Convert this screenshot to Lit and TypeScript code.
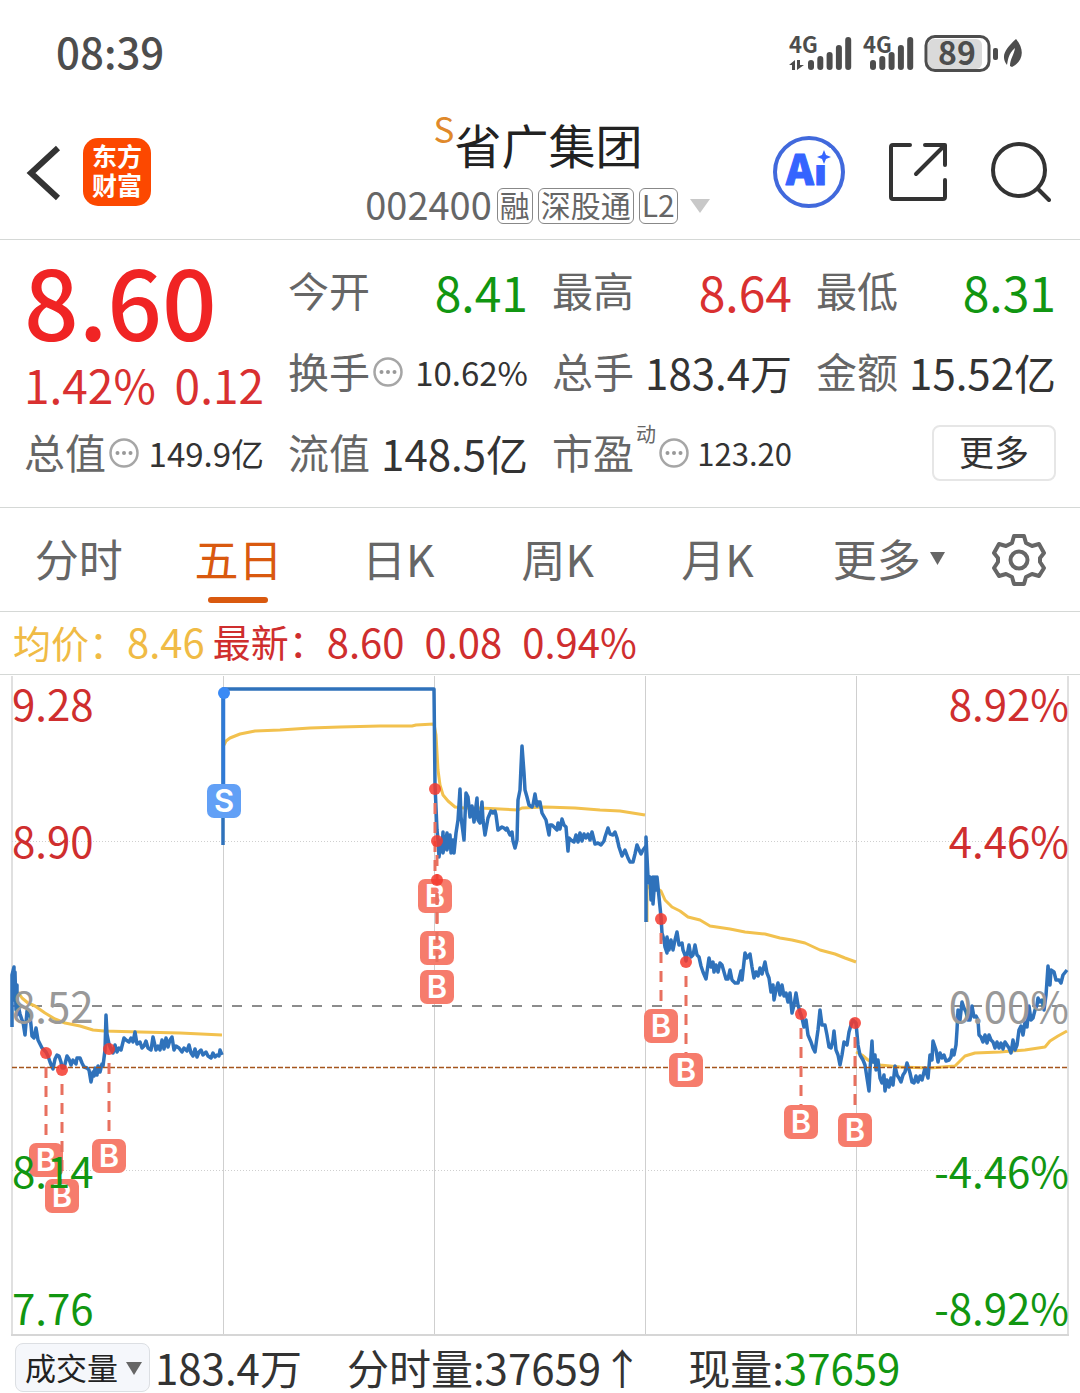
import { LitElement, html, svg, css, nothing } from "lit";
import { customElement, state } from "lit/decorators.js";
import { classMap } from "lit/directives/class-map.js";

type Tone = "up" | "down" | "plain";

interface Quote {
  label: string;
  value: string;
  tone: Tone;
  size: "lg" | "md" | "sm" | "xs";
  info?: boolean;
  sup?: string;
}

interface Marker {
  kind: "B" | "S";
  x: number;
  y: number;
  /** Distance from the trade point down to the centre of its badge. */
  stem: number;
}

const QUOTES: Quote[] = [
  { label: "今开", value: "8.41", tone: "down", size: "lg" },
  { label: "最高", value: "8.64", tone: "up", size: "lg" },
  { label: "最低", value: "8.31", tone: "down", size: "lg" },
  { label: "换手", value: "10.62%", tone: "plain", size: "sm", info: true },
  { label: "总手", value: "183.4万", tone: "plain", size: "md" },
  { label: "金额", value: "15.52亿", tone: "plain", size: "md" },
  { label: "总值", value: "149.9亿", tone: "plain", size: "sm", info: true },
  { label: "流值", value: "148.5亿", tone: "plain", size: "md" },
  { label: "市盈", value: "123.20", tone: "plain", size: "xs", info: true, sup: "动" },
];

const TABS = ["分时", "五日", "日K", "周K", "月K"];

const PRICE_LINES = [
  "12,1027 12,975 14,967 14,1000 15,972 16,1010 17,985 17,1015 18,1005 20,1014 22,1020 23,1022 25,1035 27,1011 28,1014 30,1016 31,1025 32,1036 34,1038 36,1028 38,1040 40,1044 42,1048 44,1050 46,1052 48,1056 50,1062 52,1067 53,1069 55,1059 57,1055 59,1056 61,1062 62,1068 64,1068 66,1060 67,1056 69,1059 71,1065 73,1060 76,1064 77,1058 80,1058 82,1063 84,1067 87,1068 89,1070 91,1082 93,1072 94,1076 95,1068 97,1075 98,1066 100,1072 102,1064 103,1066 105,1050 106,1015 107,1034 109,1044 111,1049 113,1053 115,1045 117,1052 119,1048 121,1050 124,1038 126,1040 129,1042 131,1038 133,1042 135,1032 137,1044 140,1042 142,1048 144,1046 146,1041 148,1048 151,1050 153,1037 156,1050 158,1046 160,1050 162,1040 164,1049 166,1038 168,1047 170,1040 172,1037 174,1050 176,1046 179,1048 182,1052 184,1048 187,1051 189,1045 191,1053 193,1056 195,1049 197,1057 199,1052 201,1050 203,1055 206,1052 208,1056 211,1058 213,1053 215,1057 217,1055 219,1056 220,1050 222,1055",
  "223,845 223,689 434,689 435,785 437,830 438,840 439,857 441,840 442,850 443,832 443,853 447,833 447,850 450,835 451,853 453,840 454,853 456,833 458,820 460,789 461,817 464,840 466,793 468,797 470,817 472,806 474,822 477,798 478,820 480,823 482,802 483,820 485,835 488,818 491,811 493,813 495,811 496,815 498,830 502,827 504,828 506,830 507,828 509,833 510,835 512,832 513,841 515,848 517,840 518,800 520,790 521,767 522,746 524,773 525,790 527,797 529,805 532,807 533,805 535,794 537,806 538,802 540,802 542,813 546,820 549,835 550,825 552,825 554,827 557,830 558,823 560,829 562,819 564,825 566,827 568,851 569,838 571,840 574,842 576,835 578,842 580,833 582,841 584,834 586,838 588,834 590,840 592,832 595,844 598,843 601,845 604,841 605,837 608,828 610,834 613,835 615,832 617,838 619,847 622,856 625,850 628,858 630,862 633,862 635,854 637,845 640,852 641,854 643,850 646,846",
  "646,922 646,837 648,877 649,883 650,877 651,900 653,877 653,904 655,877 656,890 657,877 659,897 661,917 662,933 664,940 665,947 667,953 667,937 669,950 671,940 673,950 675,940 677,932 679,945 682,943 683,950 685,955 686,961 689,945 691,957 693,955 695,945 697,955 699,957 701,966 703,972 706,979 708,965 709,958 711,967 713,962 714,972 716,965 718,972 720,963 722,965 724,972 726,979 728,979 730,970 732,980 735,983 738,983 740,975 741,971 742,980 745,953 747,958 750,954 752,967 754,978 756,972 758,976 760,968 762,974 765,962 767,973 769,978 770,985 771,992 773,985 774,1000 776,990 778,983 780,995 782,985 784,996 786,993 788,1002 790,993 792,1013 794,1005 796,993 798,1005 800,1012 802,1018 804,1027 806,1020 808,1035 811,1042 813,1048 815,1052 817,1037 818,1030 820,1010 822,1025 825,1025 827,1035 829,1047 831,1048 833,1040 834,1031 836,1050 838,1055 840,1065 842,1055 844,1042 847,1045 849,1032 851,1025 853,1020 856,1023 858,1045 860,1055 863,1060 865,1065 867,1078 869,1091 870,1070 872,1041 873,1062 875,1055 876,1070 878,1060 880,1078 882,1083 884,1075 885,1091 887,1080 889,1087 891,1078 893,1085 895,1066 897,1075 899,1078 901,1082 903,1075 905,1072 907,1063 910,1073 912,1082 914,1083 916,1076 918,1082 920,1076 922,1080 925,1068 927,1075 928,1078 930,1055 932,1060 933,1041 936,1050 938,1062 940,1053 942,1058 944,1055 946,1061 949,1060 951,1057 952,1050 954,1055 956,1045 957,1030 958,1010 960,1020 962,1002 964,1008 966,1012 968,1020 970,1020 972,1006 974,1017 976,1016 978,1020 979,1035 981,1037 983,1042 985,1035 987,1043 989,1035 991,1040 993,1042 995,1048 997,1042 999,1048 1001,1043 1003,1049 1005,1042 1007,1045 1009,1048 1011,1053 1013,1040 1015,1050 1017,1045 1019,1030 1021,1026 1023,1035 1025,1022 1027,1027 1029,1006 1031,1020 1033,1018 1035,1010 1037,1005 1038,998 1040,1002 1042,1000 1044,1010 1046,995 1048,966 1050,985 1051,970 1054,972 1056,980 1059,980 1061,983 1063,975 1067,970",
];

const AVERAGE_LINES = [
  "18,992 22,998 28,1003 35,1006 45,1013 55,1019 65,1023 80,1026 93,1030 104,1031 140,1032 180,1033 222,1035",
  "224,745 226,741 230,738 240,734 255,731 280,730 310,728 340,727 380,726 412,726 416,725 434,724 436,735 438,770 440,785 443,795 448,801 455,807 464,808 480,808 500,809 518,810 522,808 545,807 575,808 600,810 620,811 645,815",
  "647,922 647,890 648,886 655,887 661,891 665,900 672,907 680,911 688,917 700,920 710,926 730,929 745,932 765,934 780,938 792,940 805,943 820,950 835,954 845,958 856,962",
  "856,1052 862,1055 868,1060 880,1065 900,1067 930,1068 955,1066 960,1061 965,1056 975,1053 1000,1052 1025,1050 1045,1047 1050,1041 1058,1036 1067,1031",
];

const MARKERS: Marker[] = [
  { kind: "B", x: 46, y: 1053, stem: 107 },
  { kind: "B", x: 62, y: 1070, stem: 126 },
  { kind: "B", x: 109, y: 1049, stem: 107 },
  { kind: "S", x: 224, y: 693, stem: 108 },
  { kind: "B", x: 435, y: 789, stem: 107 },
  { kind: "B", x: 437, y: 841, stem: 107 },
  { kind: "B", x: 437, y: 880, stem: 107 },
  { kind: "B", x: 661, y: 919, stem: 107 },
  { kind: "B", x: 686, y: 962, stem: 108 },
  { kind: "B", x: 801, y: 1014, stem: 108 },
  { kind: "B", x: 855, y: 1023, stem: 107 },
];

const AXIS = [
  { y: 721, left: "9.28", right: "8.92%", tone: "up" },
  { y: 858, left: "8.90", right: "4.46%", tone: "up" },
  { y: 1023, left: "8.52", right: "0.00%", tone: "flat" },
  { y: 1188, left: "8.14", right: "-4.46%", tone: "down" },
  { y: 1325, left: "7.76", right: "-8.92%", tone: "down" },
];

const FONT = css`"Noto Sans CJK SC", "Noto Sans", sans-serif`;

@customElement("phone-status")
export class PhoneStatus extends LitElement {
  static styles = css`
    :host {
      display: flex;
      justify-content: space-between;
      align-items: center;
      height: 108px;
      padding: 0 56px;
      box-sizing: border-box;
      font-family: ${FONT};
      color: #4d4d4d;
    }
    .time {
      padding-bottom: 6px;
      font-size: 42px;
      line-height: 60px;
      font-weight: 500;
    }
    .icons {
      display: block;
    }
    .net {
      font-size: 22px;
      font-weight: 700;
      fill: #4d4d4d;
    }
    .level {
      font-size: 32px;
      font-weight: 700;
      fill: #4d4d4d;
    }
  `;

  private bars(x: number) {
    return [10, 14, 18, 25, 33].map(
      (h, i) => svg`<rect x=${x + i * 9.3} y=${36 - h} width="6" height=${h} rx="3" fill="#4d4d4d" />`,
    );
  }

  render() {
    return html`
      <span class="time">08:39</span>
      <svg class="icons" width="236" height="60" viewBox="0 -10 236 60" role="img" aria-label="4G 4G 89%">
        <text class="net" x="1" y="19">4G</text>
        <path d="M1 31 L7 26 V36 H4 V31 Z M9 26 H12 V31 H16 L9 36 Z" fill="#4d4d4d" />
        ${this.bars(20)}
        <text class="net" x="75" y="19">4G</text>
        ${this.bars(82)}
        <rect x="140" y="5" width="54" height="30" rx="6" fill="#dadada" />
        <rect x="138" y="2.5" width="63" height="34" rx="9" fill="none" stroke="#4d4d4d" stroke-width="3" />
        <text class="level" x="150" y="31">89</text>
        <rect x="205" y="14" width="5" height="12" rx="2" fill="#4d4d4d" />
        <path d="M228 5 C238 17 234 28 224 33 L222 32 C222 25 226 21 227 14 C220 20 220 26 219 31 C212 22 218 14 228 5 Z" fill="#4d4d4d" />
      </svg>
    `;
  }
}

@customElement("stock-header")
export class StockHeader extends LitElement {
  static styles = css`
    :host {
      display: grid;
      grid-template-columns: 1fr auto 1fr;
      align-items: center;
      height: 132px;
      padding: 0 29px 4px 25px;
      box-sizing: border-box;
      border-bottom: 1px solid #d5d8d6;
      font-family: ${FONT};
    }
    button {
      display: block;
      padding: 0;
      border: 0;
      background: none;
      font-family: inherit;
      cursor: pointer;
    }
    svg {
      display: block;
    }
    .left,
    .right {
      display: flex;
      align-items: center;
    }
    .left {
      gap: 18px;
    }
    .right {
      gap: 43px;
      justify-content: flex-end;
    }
    .logo {
      width: 68px;
      height: 68px;
      border-radius: 15px;
      background: #fc4800;
      color: #fff;
      font-size: 25px;
      font-weight: 700;
      line-height: 29px;
      padding-bottom: 3px;
    }
    .title {
      display: flex;
      flex-direction: column;
      align-items: center;
      gap: 14px;
      padding-bottom: 6px;
    }
    .name {
      display: flex;
      align-items: flex-start;
      margin: 0;
      font-size: 47px;
      font-weight: 400;
      line-height: 60px;
      color: #222;
    }
    .badge {
      font-size: 35px;
      line-height: 28px;
      color: #e0892a;
    }
    .sub {
      display: flex;
      align-items: center;
      gap: 5px;
      color: #666;
    }
    .code {
      padding-bottom: 4px;
      font-size: 38px;
      line-height: 32px;
    }
    .tag {
      border: 1px solid #888;
      border-radius: 6px;
      padding: 0 2px 4px;
      font-size: 30px;
      line-height: 30px;
    }
    .drop {
      margin-left: 6px;
    }
    .ai {
      font-size: 42px;
      font-weight: 900;
      fill: #3564ff;
      stroke: #3564ff;
      stroke-linejoin: round;
    }
  `;

  render() {
    return html`
      <div class="left">
        <button aria-label="返回">
          <svg width="40" height="60" viewBox="0 0 40 60">
            <path d="M33 6 L6 31 L33 56" fill="none" stroke="#333" stroke-width="6" />
          </svg>
        </button>
        <button class="logo">东方<br />财富</button>
      </div>
      <div class="title">
        <h1 class="name"><span class="badge">S</span>省广集团</h1>
        <div class="sub">
          <span class="code">002400</span>
          <span class="tag">融</span>
          <span class="tag">深股通</span>
          <span class="tag">L2</span>
          <button class="drop" aria-label="切换股票">
            <svg width="22" height="15" viewBox="0 0 22 15"><path d="M1 1 H21 L11 15 Z" fill="#c8c8c8" /></svg>
          </button>
        </div>
      </div>
      <div class="right">
        <button aria-label="智能助手">
          <svg width="72" height="72" viewBox="0 0 72 72">
            <circle cx="36" cy="36" r="34" fill="none" stroke="#4169dc" stroke-width="4" />
            <text class="ai" x="13" y="49">Ai</text>
            <rect x="42" y="12" width="16" height="17" fill="#fff" />
            <path d="M51 14 L53 19 L58 21 L53 23 L51 28 L49 23 L44 21 L49 19 Z" fill="#3564ff" />
          </svg>
        </button>
        <button aria-label="分享">
          <svg width="60" height="60" viewBox="0 0 60 60" fill="none" stroke="#333" stroke-width="4" stroke-linecap="round" stroke-linejoin="round">
            <path d="M22 3 H5 Q3 3 3 5 V55 Q3 57 5 57 H55 Q57 57 57 55 V38" />
            <path d="M37 3 H57 V23 M56 4 L28 32" />
          </svg>
        </button>
        <button aria-label="搜索">
          <svg width="60" height="60" viewBox="0 0 60 60" fill="none" stroke="#333" stroke-width="4" stroke-linecap="round">
            <circle cx="28" cy="28" r="26" />
            <path d="M47 47 L58 58" />
          </svg>
        </button>
      </div>
    `;
  }
}

@customElement("quote-panel")
export class QuotePanel extends LitElement {
  static styles = css`
    :host {
      display: grid;
      grid-template-columns: repeat(4, 1fr);
      grid-auto-rows: 81px;
      column-gap: 24px;
      padding: 10px 24px 14px;
      border-bottom: 1px solid #d5d8d6;
      font-family: ${FONT};
    }
    .head {
      grid-row: span 2;
      padding-top: 4px;
      color: #d93030;
    }
    .price {
      font-size: 96px;
      line-height: 92px;
      font-weight: 500;
      color: #f02424;
    }
    .change {
      display: flex;
      justify-content: space-between;
      margin-top: 8px;
      font-size: 46px;
      line-height: 60px;
    }
    .cell {
      display: flex;
      align-items: center;
      white-space: nowrap;
    }
    .label {
      padding-bottom: 4px;
      font-size: 41px;
      line-height: 60px;
      color: #666;
    }
    .sup {
      align-self: flex-start;
      margin-left: 2px;
      font-size: 20px;
      line-height: 28px;
      padding-top: 8px;
      color: #666;
    }
    .info {
      margin-left: 3px;
      padding: 0;
      border: 0;
      background: none;
    }
    .info svg {
      display: block;
    }
    .value {
      margin-left: auto;
      line-height: 60px;
    }
    .lg {
      font-size: 48px;
    }
    .md {
      font-size: 42px;
    }
    .sm {
      font-size: 33px;
    }
    .xs {
      font-size: 31px;
    }
    .up {
      color: #d93030;
    }
    .down {
      color: #119611;
    }
    .plain {
      color: #333;
    }
    .more {
      justify-self: end;
      align-self: center;
      padding: 0 25px 4px;
      border: 2px solid #e6e6e6;
      border-radius: 8px;
      background: #fff;
      color: #333;
      font-family: inherit;
      font-size: 35px;
      line-height: 48px;
    }
  `;

  render() {
    return html`
      <div class="head">
        <div class="price">8.60</div>
        <div class="change"><span>1.42%</span><span>0.12</span></div>
      </div>
      ${QUOTES.map(
        (q) => html`
          <div class="cell">
            <span class="label">${q.label}</span>
            ${q.sup ? html`<span class="sup">${q.sup}</span>` : nothing}
            ${q.info
              ? html`<button class="info" aria-label=${q.label + "说明"}>
                  <svg width="30" height="30" viewBox="0 0 30 30">
                    <circle cx="15" cy="15" r="13.5" fill="none" stroke="#a6a6a6" stroke-width="2.5" />
                    <g fill="#999">
                      <circle cx="8.5" cy="15" r="2" />
                      <circle cx="15" cy="15" r="2" />
                      <circle cx="21.5" cy="15" r="2" />
                    </g>
                  </svg>
                </button>`
              : nothing}
            <span class=${"value " + q.size + " " + q.tone}>${q.value}</span>
          </div>
        `,
      )}
      <button class="more">更多</button>
    `;
  }
}

@customElement("period-tabs")
export class PeriodTabs extends LitElement {
  @state() private active = "五日";

  static styles = css`
    :host {
      display: grid;
      grid-template-columns: repeat(6, 1fr) 122px;
      height: 104px;
      box-sizing: border-box;
      border-bottom: 1px solid #d5d8d6;
      font-family: ${FONT};
    }
    button {
      display: flex;
      flex-direction: column;
      align-items: center;
      justify-content: flex-end;
      gap: 9px;
      padding: 0 2px 8px 0;
      border: 0;
      background: none;
      font-family: inherit;
      font-size: 44px;
      line-height: 60px;
      color: #666;
      cursor: pointer;
    }
    .bar {
      width: 60px;
      height: 6px;
      border-radius: 3px;
    }
    .active {
      color: #d9590f;
    }
    .active .bar {
      background: #d9590f;
    }
    .more {
      flex-direction: row;
      align-items: center;
      justify-content: center;
      padding: 0 0 4px 22px;
    }
    .gear {
      justify-content: center;
      padding: 0;
    }
  `;

  render() {
    return html`
      ${TABS.map(
        (t) => html`<button
          class=${classMap({ active: t === this.active })}
          aria-pressed=${t === this.active}
          @click=${() => (this.active = t)}
        >
          ${t}<span class="bar"></span>
        </button>`,
      )}
      <button class="more">
        更多
        <svg width="16" height="14" viewBox="0 0 16 14"><path d="M0 1 H15 L7.5 14 Z" fill="#666" /></svg>
      </button>
      <button class="gear" aria-label="设置">
        <svg width="54" height="54" viewBox="0 0 54 54" fill="none" stroke="#666" stroke-width="4" stroke-linejoin="round">
          <path d="M22 3 H32 L34 10 L40 13 L47 11 L52 20 L48 25 V29 L52 35 L47 43 L40 41 L34 44 L32 51 H22 L20 44 L14 41 L7 43 L2 35 L6 29 V25 L2 20 L7 11 L14 13 L20 10 Z" />
          <circle cx="27" cy="27" r="8.5" />
        </svg>
      </button>
    `;
  }
}

@customElement("trend-chart")
export class TrendChart extends LitElement {
  static styles = css`
    :host {
      display: block;
      font-family: ${FONT};
    }
    .legend {
      display: flex;
      align-items: center;
      height: 63px;
      padding: 0 13px 4px;
      box-sizing: border-box;
      border-bottom: 1px solid #d5d8d6;
      font-size: 38px;
      line-height: 58px;
      color: #cf2e2e;
    }
    .avg {
      color: #f0bb45;
      margin-right: 8px;
    }
    .num {
      font-size: 40px;
    }
    .gap {
      margin-left: 20px;
    }
    .plot {
      display: block;
      width: 100%;
      height: auto;
      overflow: visible;
    }
    .axis {
      font-size: 42px;
    }
    .up {
      fill: #cf2e2e;
    }
    .flat {
      fill: #999;
    }
    .down {
      fill: #119611;
    }
    .mark {
      font-family: Inter, "Liberation Sans", sans-serif;
      font-size: 31px;
      font-weight: 600;
      fill: #fff;
    }
  `;

  private tint(kind: Marker["kind"]) {
    return kind === "B" ? "#f67c6c" : "#62a0f6";
  }

  render() {
    return html`
      <div class="legend">
        <span class="avg">均价：<span class="num">8.46</span></span>
        <span>最新：</span>
        <span class="num">8.60</span>
        <span class="num gap">0.08</span>
        <span class="num gap">0.94%</span>
      </div>
      <svg class="plot" viewBox="0 675 1080 661" role="img" aria-label="五日走势图">
        <g stroke="#cfcfcf">
          <path d="M223.5 676 V1334 M434.5 676 V1334 M645.5 676 V1334 M856.5 676 V1334" />
          <path d="M12 676 V1335 M1068 676 V1335" stroke="#e0e0e0" stroke-width="2" />
          <path d="M11 1335 H1069" stroke="#d6d6d6" stroke-width="2" />
          <path d="M12 841.5 H1067 M12 1170.5 H1067" stroke-dasharray="1 2" />
        </g>
        <path d="M12 1006 H1067" stroke="#8c8c8c" stroke-width="2" stroke-dasharray="10 10" />
        <g fill="none" stroke-linejoin="round">
          ${AVERAGE_LINES.map((p) => svg`<polyline points=${p} stroke="#f2c14e" stroke-width="3" />`)}
          ${PRICE_LINES.map((p) => svg`<polyline points=${p} stroke="#2f72bb" stroke-width="3.5" />`)}
        </g>
        <path d="M12 1067.5 H1067" stroke="#a5551c" stroke-width="1.5" stroke-dasharray="5 2" />
        ${MARKERS.map(
          (m) => svg`
            <rect x=${m.x - 17} y=${m.y + m.stem - 17} width="34" height="34" rx="7" fill=${this.tint(m.kind)} />
            <text class="mark" x=${m.x} y=${m.y + m.stem + 11} text-anchor="middle">${m.kind}</text>`,
        )}
        ${MARKERS.map((m) =>
          m.kind === "B"
            ? svg`<path d=${`M${m.x} ${m.y + 14} V${m.y + m.stem - 17}`} stroke="#e8705f" stroke-width="3" stroke-dasharray="11 8" />
                  <circle cx=${m.x} cy=${m.y} r="6" fill="#f5392e" fill-opacity="0.85" />`
            : svg`<path d=${`M${m.x - 0.5} ${m.y} V${m.y + m.stem - 17}`} stroke="#2f7ad6" stroke-width="3.5" />
                  <circle cx=${m.x} cy=${m.y} r="6" fill="#3a8af5" />`,
        )}
        ${AXIS.map(
          (a) => svg`
            <text class=${"axis " + a.tone} x="12" y=${a.y}>${a.left}</text>
            <text class=${"axis " + a.tone} x="1069" y=${a.y} text-anchor="end">${a.right}</text>`,
        )}
      </svg>
    `;
  }
}

@customElement("volume-bar")
export class VolumeBar extends LitElement {
  static styles = css`
    :host {
      display: flex;
      align-items: center;
      height: 57px;
      padding: 6px 15px 0;
      box-sizing: border-box;
      font-family: ${FONT};
      font-size: 42px;
      line-height: 48px;
      color: #333;
      white-space: nowrap;
    }
    .pick {
      display: grid;
      align-items: center;
      margin-right: 5px;
    }
    .pick select,
    .pick svg {
      grid-area: 1 / 1;
    }
    .pick svg {
      justify-self: end;
      margin-right: 8px;
      pointer-events: none;
    }
    select {
      appearance: none;
      width: 135px;
      height: 49px;
      padding: 0 0 3px 9px;
      border: 1px solid #dcdfe3;
      border-radius: 8px;
      background: #f5f7fb;
      color: #222;
      font-family: inherit;
      font-size: 31px;
    }
    .text {
      padding-bottom: 2px;
    }
    .stat {
      margin-left: 45px;
    }
    .down {
      color: #119611;
    }
  `;

  render() {
    return html`
      <label class="pick">
        <select aria-label="指标">
          <option>成交量</option>
        </select>
        <svg width="16" height="14" viewBox="0 0 16 14"><path d="M0 1 H16 L8 14 Z" fill="#666" /></svg>
      </label>
      <span class="text">183.4万</span>
      <span class="text stat">分时量:37659↑</span>
      <span class="text stat">现量:<span class="down">37659</span></span>
    `;
  }
}

@customElement("app-root")
export class AppRoot extends LitElement {
  static styles = css`
    :host {
      display: block;
      background: #fff;
    }
  `;

  render() {
    return html`
      <main lang="zh-CN">
        <phone-status></phone-status>
        <stock-header></stock-header>
        <quote-panel></quote-panel>
        <period-tabs></period-tabs>
        <trend-chart></trend-chart>
        <volume-bar></volume-bar>
      </main>
    `;
  }
}
